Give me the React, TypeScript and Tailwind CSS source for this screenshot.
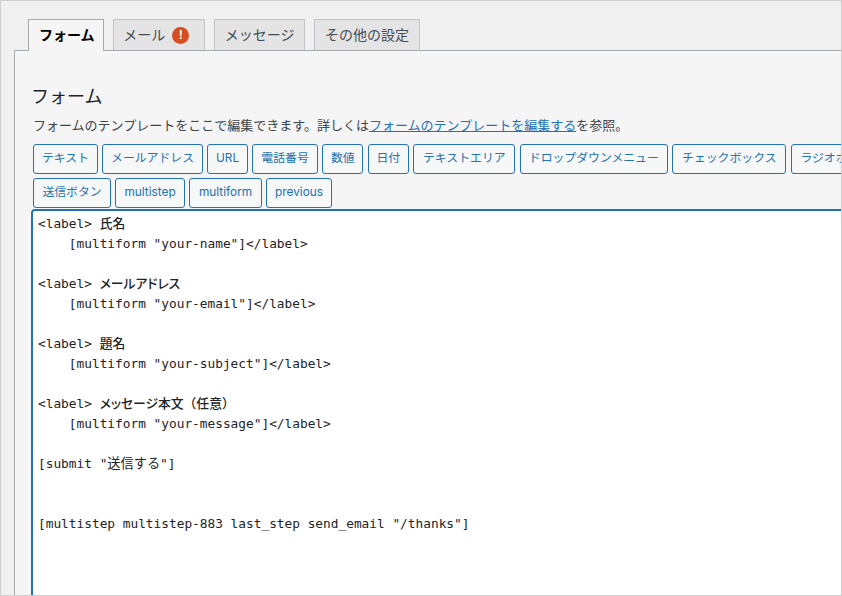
const sans = "font-['Liberation_Sans','Noto_Sans_CJK_JP',sans-serif]";

const firstRow = [
  { label: "テキスト", width: "w-[64.5px]" },
  { label: "メールアドレス", width: "w-[100.5px]" },
  { label: "URL", width: "w-[40.5px]" },
  { label: "電話番号", width: "w-[65.5px]" },
  { label: "数値", width: "w-[41px]" },
  { label: "日付", width: "w-[41px]" },
  { label: "テキストエリア", width: "w-[102px]" },
  { label: "ドロップダウンメニュー", width: "w-[148px]" },
  { label: "チェックボックス", width: "w-[114px]" },
  { label: "ラジオボタン", width: "w-[90px]" },
];
const secondRow = [
  { label: "送信ボタン", width: "w-[77.5px]" },
  { label: "multistep", width: "w-[69.5px]" },
  { label: "multiform", width: "w-[72.5px]" },
  { label: "previous", width: "w-[65.5px]" },
];

function Jp({ children, palt = true }: { children: React.ReactNode; palt?: boolean }) {
  return (
    <span
      className={
        palt
          ? "font-['Noto_Sans_CJK_JP',sans-serif] font-medium leading-none [font-feature-settings:'palt']"
          : "font-['Noto_Sans_CJK_JP',sans-serif] font-medium leading-none"
      }
    >
      {children}
    </span>
  );
}

const formLines: React.ReactNode[] = [
  <>
    {"<label> "}
    <Jp>氏名</Jp>
  </>,
  '    [multiform "your-name"]</label>',
  "",
  <>
    {"<label> "}
    <Jp>メールアドレス</Jp>
  </>,
  '    [multiform "your-email"]</label>',
  "",
  <>
    {"<label> "}
    <Jp>題名</Jp>
  </>,
  '    [multiform "your-subject"]</label>',
  "",
  <>
    {"<label> "}
    <Jp>メッセージ本文</Jp>
    <Jp palt={false}>（任意）</Jp>
  </>,
  '    [multiform "your-message"]</label>',
  "",
  <>
    {'[submit "'}
    <span className="text-[13.2px] leading-none">送信する</span>
    {'"]'}
  </>,
  "",
  "",
  '[multistep multistep-883 last_step send_email "/thanks"]',
];

function Tab({ label, active, children }: { label: string; active?: boolean; children?: React.ReactNode }) {
  return (
    <div
      className={
        active
          ? "relative z-10 -mb-px flex h-[32px] items-center border border-b-0 border-[#a7aaad] bg-[#f5f5f6] pl-[10px] pr-[8px] text-[14px] font-semibold text-[#000]"
          : "flex h-[31px] items-center border border-b-0 border-[#c3c4c7] bg-[#e4e4e5] px-[9.75px] text-[14px] text-[#454b52]"
      }
    >
      {label}
      {children}
    </div>
  );
}

function TagButton({ label, width }: { label: string; width: string }) {
  return (
    <span
      className={`flex h-[30px] shrink-0 items-start justify-center whitespace-nowrap rounded-[3px] border border-[#2271b1] bg-[#f6f7f7] pt-[4px] font-['Inter','Noto_Sans_CJK_JP',sans-serif] text-[11.85px] leading-[18px] text-[#2271b1] ${width}`}
    >
      {label}
    </span>
  );
}

export default function App() {
  return (
    <div className={`h-[596px] w-[842px] overflow-hidden border border-[#cfcfd0] bg-[#f0f0f1] pl-[13px] pt-[18px] ${sans}`}>
      <div className="flex gap-[9px] pl-[14px]">
        <Tab label="フォーム" active />
        <Tab label="メール">
          <span className="ml-[7px] mr-[5px] flex h-[17px] w-[17px] items-center justify-center rounded-full bg-[#d54e21] text-[12px] font-bold text-white">
            !
          </span>
        </Tab>
        <Tab label="メッセージ" />
        <Tab label="その他の設定" />
      </div>

      <div className="h-[600px] w-[900px] border-l border-t border-[#a7aaad] bg-[#f5f5f6] pl-[16px]">
        <h2 className="mt-[34px] text-[18px] leading-[24px] text-[#1d2327]">フォーム</h2>
        <p className="mt-[7px] pl-[2px] text-[13px] leading-[20px] text-[#3c434a]">
          フォームのテンプレートをここで編集できます。詳しくは
          <a href="#" className="text-[#2271b1] underline">
            フォームのテンプレートを編集する
          </a>
          を参照。
        </p>

        <div className="mt-[8px] flex flex-col gap-[4px] pl-[2.3px]">
          <div className="flex gap-[4.5px]">
            {firstRow.map((tag) => (
              <TagButton key={tag.label} label={tag.label} width={tag.width} />
            ))}
          </div>
          <div className="flex gap-[4.5px]">
            {secondRow.map((tag) => (
              <TagButton key={tag.label} label={tag.label} width={tag.width} />
            ))}
          </div>
        </div>

        <pre className="mt-[1px] h-[500px] rounded-tl-[4px] border-2 border-[#2271b1] bg-white pl-[5px] pt-[3px] font-['DejaVu_Sans_Mono','Noto_Sans_CJK_JP',monospace] text-[12.8px] leading-[20px] text-[#1d2327]">
          {formLines.map((line, i) => (
            <div key={i} className="h-[20px]">
              {line}
            </div>
          ))}
        </pre>
      </div>
    </div>
  );
}
